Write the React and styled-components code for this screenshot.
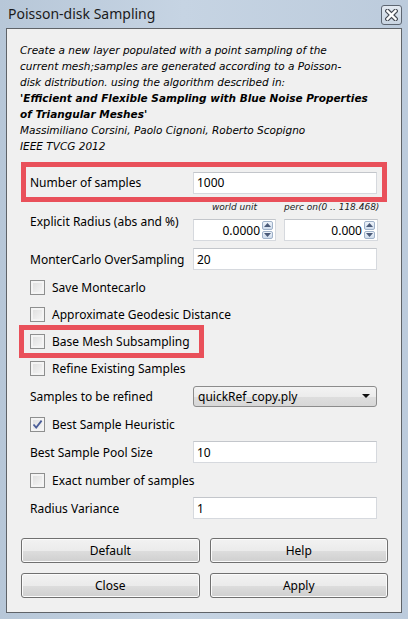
import React from 'react';
import styled, { createGlobalStyle } from 'styled-components';

const GlobalStyle = createGlobalStyle`
  body {
    margin: 0;
    font-family: 'Noto Sans', 'Open Sans', sans-serif;
  }
`;

const description = [
  { text: 'Create a new layer populated with a point sampling of the' },
  { text: 'current mesh;samples are generated according to a Poisson-' },
  { text: 'disk distribution. using the algorithm described in:' },
  { text: "'Efficient and Flexible Sampling with Blue Noise Properties", bold: true },
  { text: "of Triangular Meshes'", bold: true },
  { text: 'Massimiliano Corsini, Paolo Cignoni, Roberto Scopigno' },
  { text: 'IEEE TVCG 2012' },
];

const CheckIcon = () => (
  <svg width='11' height='11' viewBox='0 0 11 11'>
    <path d='M1.5 5.5 L4.2 8.6 L9.6 1.6' fill='none' stroke='#4a5d98' strokeWidth='1.8' />
  </svg>
);

const Check = ({ label, checked, highlight }) => (
  <CheckItem $highlight={highlight}>
    <Box>{checked && <CheckIcon />}</Box>
    <span>{label}</span>
  </CheckItem>
);

const Spin = ({ value, width }) => (
  <SpinBox style={{ width }}>
    <SpinValue>{value}</SpinValue>
    <Arrows>
      <ArrowBtn>
        <svg width='7' height='4' viewBox='0 0 7 4'>
          <path d='M0 4 L3.5 0 L7 4 Z' fill='#4a5a78' />
        </svg>
      </ArrowBtn>
      <ArrowBtn>
        <svg width='7' height='4' viewBox='0 0 7 4'>
          <path d='M0 0 L3.5 4 L7 0 Z' fill='#4a5a78' />
        </svg>
      </ArrowBtn>
    </Arrows>
  </SpinBox>
);

const App = () => {
  return (
    <>
      <GlobalStyle />
      <Window>
        <TitleBar>
          <Title>Poisson-disk Sampling</Title>
          <CloseButton>
            <svg width='13' height='12' viewBox='0 0 13 12'>
              <path
                d='M2.5 2 L10.5 10 M10.5 2 L2.5 10'
                stroke='#474c55'
                strokeWidth='4.6'
                strokeLinecap='square'
              />
              <path
                d='M2.5 2 L10.5 10 M10.5 2 L2.5 10'
                stroke='#ffffff'
                strokeWidth='2.4'
                strokeLinecap='square'
              />
            </svg>
          </CloseButton>
        </TitleBar>
        <Client>
          <Description>
            {description.map((line, i) => (
              <Line key={i} $bold={line.bold}>
                {line.text}
              </Line>
            ))}
          </Description>
          <Form>
            <Row $h={29}>
              <HighlightRow>
                <Label>Number of samples</Label>
                <TextField>1000</TextField>
              </HighlightRow>
            </Row>
            <Row $h={48}>
              <Label>Explicit Radius (abs and %)</Label>
              <RadiusGroup>
                <Caption>world unit</Caption>
                <Caption>perc on(0 .. 118.468)</Caption>
                <Spin value='0.0000' width='83px' />
                <Spin value='0.000' width='94px' />
              </RadiusGroup>
            </Row>
            <Row $h={28}>
              <Label>MonterCarlo OverSampling</Label>
              <TextField>20</TextField>
            </Row>
            <Row $h={28}>
              <Check label='Save Montecarlo' />
            </Row>
            <Row $h={27}>
              <Check label='Approximate Geodesic Distance' />
            </Row>
            <Row $h={27}>
              <Check label='Base Mesh Subsampling' highlight />
            </Row>
            <Row $h={27}>
              <Check label='Refine Existing Samples' />
            </Row>
            <Row $h={28}>
              <Label>Samples to be refined</Label>
              <Combo>
                <span>quickRef_copy.ply</span>
                <svg width='8' height='4' viewBox='0 0 8 4'>
                  <path d='M0 0 L8 0 L4 4 Z' fill='#111' />
                </svg>
              </Combo>
            </Row>
            <Row $h={28}>
              <Check label='Best Sample Heuristic' checked />
            </Row>
            <Row $h={28}>
              <Label>Best Sample Pool Size</Label>
              <TextField>10</TextField>
            </Row>
            <Row $h={28}>
              <Check label='Exact number of samples' />
            </Row>
            <Row $h={28}>
              <Label>Radius Variance</Label>
              <TextField>1</TextField>
            </Row>
          </Form>
          <Buttons>
            <Button>Default</Button>
            <Button>Help</Button>
            <Button>Close</Button>
            <Button>Apply</Button>
          </Buttons>
        </Client>
      </Window>
    </>
  );
};

export default App;

const Window = styled.div`
  width: 408px;
  height: 619px;
  box-sizing: border-box;
  padding: 0 6px 6px 6px;
  display: flex;
  flex-direction: column;
  background: linear-gradient(90deg, #b7c7d8 0%, #c6d4e3 45%, #bccbdc 100%);
`;

const TitleBar = styled.div`
  height: 28px;
  display: flex;
  align-items: flex-start;
  justify-content: space-between;
  padding-left: 2px;
`;

const Title = styled.div`
  margin-top: 4px;
  font-family: 'Noto Sans', sans-serif;
  font-size: 14px;
  color: #1b1b1b;
`;

const CloseButton = styled.div`
  margin-top: 5px;
  width: 21px;
  height: 20px;
  box-sizing: border-box;
  border: 1px solid #5d6672;
  border-radius: 3px;
  background: linear-gradient(#e3eaf2, #c9d5e2);
  display: flex;
  align-items: center;
  justify-content: center;
`;

const Client = styled.div`
  flex: 1;
  border: 1px solid #5f6368;
  background: #f0f0f0;
  display: flex;
  flex-direction: column;
`;

const Description = styled.div`
  padding: 13px 0 0 13px;
  font-family: 'DejaVu Sans', sans-serif;
  font-style: italic;
  font-size: 10.5px;
  line-height: 16px;
  color: #000;
`;

const Line = styled.div`
  white-space: nowrap;
  font-weight: ${(p) => (p.$bold ? 'bold' : 'normal')};
`;

const Form = styled.div`
  margin-top: 14px;
  padding: 0 23px;
  display: flex;
  flex-direction: column;
`;

const Row = styled.div`
  height: ${(p) => p.$h}px;
  display: grid;
  grid-template-columns: 163px 184px;
  align-items: center;
  font-size: 12px;
  color: #000;
`;

const HighlightRow = styled.div`
  grid-column: 1 / 3;
  display: grid;
  grid-template-columns: 163px 184px;
  align-items: center;
  position: relative;

  &::after {
    content: '';
    position: absolute;
    top: -10px;
    bottom: -8px;
    left: -9px;
    right: -10px;
    border: 5px solid #e9505a;
  }
`;

const Label = styled.div`
  white-space: nowrap;
`;

const TextField = styled.div`
  height: 22px;
  box-sizing: border-box;
  border: 1px solid #d6d9de;
  border-top-color: #c3c6cb;
  background: #fff;
  padding-left: 3px;
  display: flex;
  align-items: center;
`;

const RadiusGroup = styled.div`
  display: grid;
  grid-template-columns: 83px 94px;
  grid-template-rows: 12px 22px;
  column-gap: 8px;
  row-gap: 6px;
`;

const Caption = styled.div`
  font-family: 'DejaVu Sans', sans-serif;
  font-style: italic;
  font-size: 9px;
  line-height: 12px;
  text-align: center;
  white-space: nowrap;
  color: #222;
`;

const SpinBox = styled.div`
  height: 22px;
  box-sizing: border-box;
  border: 1px solid #d6d9de;
  border-top-color: #c3c6cb;
  background: #fff;
  display: flex;
  align-items: stretch;
`;

const SpinValue = styled.div`
  flex: 1;
  text-align: right;
  padding-right: 2px;
  display: flex;
  align-items: center;
  justify-content: flex-end;
`;

const Arrows = styled.div`
  width: 11px;
  margin: 1px 2px 1px 0;
  display: flex;
  flex-direction: column;
  gap: 1px;
`;

const ArrowBtn = styled.div`
  flex: 1;
  border: 1px solid #9fb1c8;
  border-radius: 2px;
  background: linear-gradient(#eef3fa, #cfdcec);
  display: flex;
  align-items: center;
  justify-content: center;
`;

const CheckItem = styled.div`
  grid-column: 1 / 3;
  justify-self: start;
  display: flex;
  align-items: center;
  gap: 7px;
  height: 16px;
  white-space: nowrap;
  position: relative;

  ${(p) =>
    p.$highlight &&
    `
    &::after {
      content: '';
      position: absolute;
      top: -9px;
      bottom: -8px;
      left: -11px;
      right: -14px;
      border: 5px solid #e9505a;
    }
  `}
`;

const Box = styled.div`
  width: 15px;
  height: 15px;
  box-sizing: border-box;
  border: 1px solid #8e8f8f;
  background: linear-gradient(135deg, #dcdcdc, #f8f8f8);
  box-shadow: inset 0 0 0 2px #f4f4f4;
  display: flex;
  align-items: center;
  justify-content: center;
`;

const Combo = styled.div`
  height: 21px;
  box-sizing: border-box;
  border: 1px solid #8c8c8c;
  border-radius: 3px;
  background: linear-gradient(#f3f3f3 0%, #ececec 50%, #dedede 51%, #d7d7d7 100%);
  display: flex;
  align-items: center;
  justify-content: space-between;
  padding: 0 6px 0 4px;
`;

const Buttons = styled.div`
  margin-top: 16px;
  padding: 0 13px 0 14px;
  display: grid;
  grid-template-columns: 1fr 1fr;
  grid-auto-rows: 25px;
  column-gap: 10px;
  row-gap: 10px;
`;

const Button = styled.button`
  font-family: 'Noto Sans', sans-serif;
  font-size: 12px;
  color: #000;
  border: 1px solid #707070;
  border-radius: 3px;
  background: linear-gradient(#f2f2f2 0%, #ebebeb 50%, #dddddd 51%, #cfcfcf 100%);
  box-shadow: inset 0 0 0 1px #fbfbfb;
  padding: 0;
  cursor: pointer;
`;
